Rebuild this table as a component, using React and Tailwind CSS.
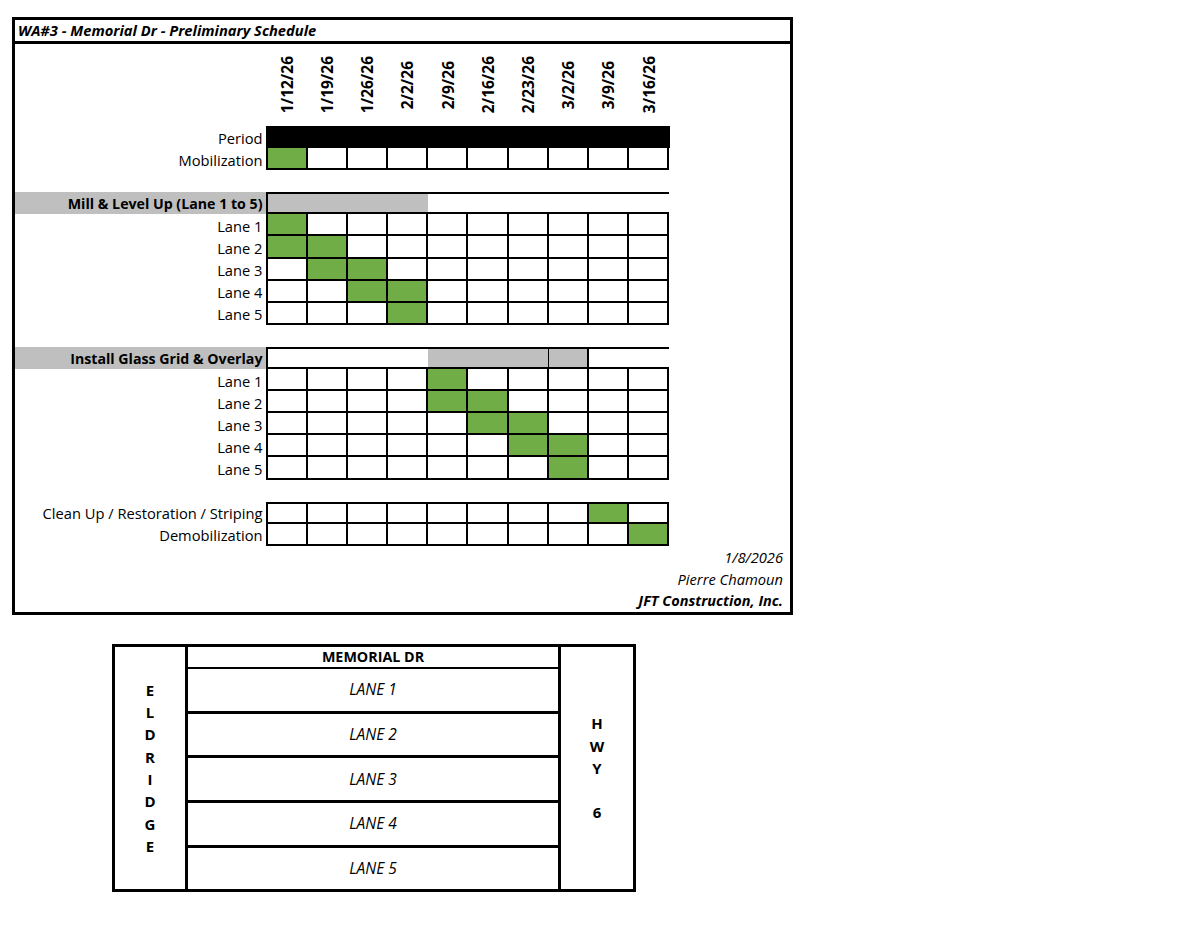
const dates = ['1/12/26', '1/19/26', '1/26/26', '2/2/26', '2/9/26', '2/16/26', '2/23/26', '3/2/26', '3/9/26', '3/16/26']

const rows = [
  { type: 'cells', label: 'Mobilization', green: [0] },
  { type: 'blank' },
  { type: 'phase', label: 'Mill & Level Up (Lane 1 to 5)', gray: [0, 1, 2, 3] },
  { type: 'cells', label: 'Lane 1', green: [0] },
  { type: 'cells', label: 'Lane 2', green: [0, 1] },
  { type: 'cells', label: 'Lane 3', green: [1, 2] },
  { type: 'cells', label: 'Lane 4', green: [2, 3] },
  { type: 'cells', label: 'Lane 5', green: [3] },
  { type: 'blank' },
  { type: 'phase', label: 'Install Glass Grid & Overlay', gray: [4, 5, 6, 7], thin: 6, thick: 7 },
  { type: 'cells', label: 'Lane 1', green: [4] },
  { type: 'cells', label: 'Lane 2', green: [4, 5] },
  { type: 'cells', label: 'Lane 3', green: [5, 6] },
  { type: 'cells', label: 'Lane 4', green: [6, 7] },
  { type: 'cells', label: 'Lane 5', green: [7] },
  { type: 'blank' },
  { type: 'cells', label: 'Clean Up / Restoration / Striping', green: [8], top: true },
  { type: 'cells', label: 'Demobilization', green: [9] },
]

function Label({ children, bold, gray }) {
  return (
    <div
      className={
        'w-[250.5px] shrink-0 flex items-center justify-end pr-[3px] pt-[2px] leading-none whitespace-nowrap ' +
        (bold ? 'font-bold text-[14.2px] ' : 'text-[14.7px] ') +
        (gray ? 'bg-[#bfbfbf]' : '')
      }
    >
      {children}
    </div>
  )
}

function Row({ row }) {
  if (row.type === 'blank') return <div className="h-[22.1px]" />

  if (row.type === 'phase') {
    return (
      <div className="flex h-[22.1px]">
        <Label bold gray>{row.label}</Label>
        <div className="flex border-t-2 border-b-2 border-l-2 border-black">
          {dates.map((d, i) => (
            <div
              key={d}
              className={
                'w-[40.2px] ' +
                (row.gray.includes(i) ? 'bg-[#bfbfbf] ' : '') +
                (i === row.thin ? 'border-r border-black ' : '') +
                (i === row.thick ? 'border-r-2 border-black' : '')
              }
            />
          ))}
        </div>
      </div>
    )
  }

  return (
    <div className="flex h-[22.1px]">
      <Label>{row.label}</Label>
      <div className={'flex border-l-2 border-black ' + (row.top ? 'border-t-2' : '')}>
        {dates.map((d, i) => (
          <div
            key={d}
            className={
              'w-[40.2px] border-r-2 border-b-2 border-black ' + (row.green.includes(i) ? 'bg-[#70ad47]' : 'bg-white')
            }
          />
        ))}
      </div>
    </div>
  )
}

const lanes = ['LANE 1', 'LANE 2', 'LANE 3', 'LANE 4', 'LANE 5']

export default function App() {
  return (
    <div className="w-[1200px] h-[927px] bg-white text-black font-['Open_Sans',sans-serif] pt-[17px]">
      {/* schedule sheet */}
      <div className="ml-[12px] w-[781px] h-[598px] border-[3px] border-black flex flex-col">
        <div className="h-[24px] shrink-0 border-b-[3px] border-black flex items-center pl-[3px] font-bold italic text-[14.7px] leading-none">
          WA#3 - Memorial Dr - Preliminary Schedule
        </div>

        <div className="flex h-[82px] shrink-0">
          <div className="w-[252.5px] shrink-0" />
          {dates.map((d) => (
            <div key={d} className="w-[40.2px] flex items-center justify-center">
              <span className="[writing-mode:vertical-rl] rotate-180 font-bold text-[15.5px] leading-none">{d}</span>
            </div>
          ))}
        </div>

        <div className="flex h-[22.1px]">
          <Label>Period</Label>
          <div className="w-[404px] bg-black" />
        </div>

        {rows.map((r, i) => (
          <Row key={i} row={r} />
        ))}

        <div className="flex flex-col items-end pr-[7px] italic text-[14.7px]">
          <div className="h-[22px] flex items-center">1/8/2026</div>
          <div className="h-[22px] flex items-center">Pierre Chamoun</div>
          <div className="h-[22px] flex items-center font-bold text-[14.5px]">JFT Construction, Inc.</div>
        </div>
      </div>

      {/* lane diagram */}
      <div className="ml-[112px] mt-[29px] w-[524px] h-[248px] border-[3px] border-black flex">
        <div className="w-[70px] shrink-0 flex flex-col items-center justify-center font-bold text-[15px] leading-[22.3px]">
          {'ELDRIDGE'.split('').map((c, i) => (
            <span key={i}>{c}</span>
          ))}
        </div>
        <div className="w-[376px] shrink-0 border-l-[3px] border-r-[3px] border-black flex flex-col">
          <div className="h-[22px] shrink-0 border-b-2 border-black flex items-center justify-center font-bold text-[14.3px] leading-none">
            MEMORIAL DR
          </div>
          {lanes.map((l, i) => (
            <div
              key={l}
              className={
                'flex items-center justify-center italic text-[15.5px] ' +
                (i < 4 ? 'h-[44.7px] shrink-0 border-b-[3px] border-black' : 'flex-1')
              }
            >
              {l}
            </div>
          ))}
        </div>
        <div className="flex-1 flex flex-col items-center justify-center font-bold text-[15px] leading-[22.3px]">
          <span>H</span>
          <span>W</span>
          <span>Y</span>
          <span>&nbsp;</span>
          <span>6</span>
        </div>
      </div>
    </div>
  )
}
